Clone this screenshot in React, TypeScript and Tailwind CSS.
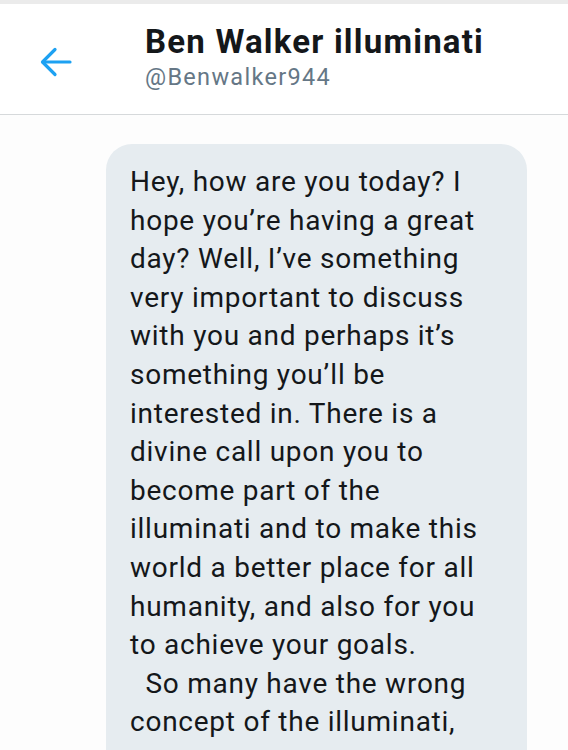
const lines = [
  "Hey, how are you today? I",
  "hope you\u2019re having a great",
  "day? Well, I\u2019ve something",
  "very important to discuss",
  "with you and perhaps it\u2019s",
  "something you\u2019ll be",
  "interested in. There is a",
  "divine call upon you to",
  "become part of the",
  "illuminati and to make this",
  "world a better place for all",
  "humanity, and also for you",
  "to achieve your goals.",
  "\u00a0\u00a0So many have the wrong",
  "concept of the illuminati,",
];

function BackArrow() {
  return (
    <svg width="34" height="32" viewBox="0 0 34 32" fill="none" stroke="#1da1f2" strokeWidth="3.2" strokeLinecap="round" strokeLinejoin="round">
      <path d="M31 16H4" />
      <path d="M16 3.5L3.5 16L16 28.5" />
    </svg>
  );
}

export default function App() {
  return (
    <div className="h-[750px] w-[568px] overflow-hidden bg-[#fdfdfd] font-['Roboto',sans-serif]">
      <div className="h-[4px] bg-[#ebebeb]" />
      <header className="flex h-[111px] items-start border-b border-[#d6d9db] bg-white">
        <div className="ml-[39px] mt-[42px]">
          <BackArrow />
        </div>
        <div className="ml-[72px] mt-[18px] flex flex-col">
          <span className="text-[33px] font-bold leading-[40px] tracking-[1.2px] text-[#14171a]">Ben Walker illuminati</span>
          <span className="text-[23.5px] leading-[30px] tracking-[1.3px] text-[#657786]">@Benwalker944</span>
        </div>
      </header>
      <main className="pl-[106px] pr-[41px] pt-[29px]">
        <div className="rounded-[26px] bg-[#e6ecf0] pb-12 pl-[24px] pr-4 pt-[19px] text-[28px] leading-[38.6px] tracking-[0.75px] text-[#14171a]">
          {lines.map((l) => (
            <div key={l} className="whitespace-pre">
              {l}
            </div>
          ))}
        </div>
      </main>
    </div>
  );
}
